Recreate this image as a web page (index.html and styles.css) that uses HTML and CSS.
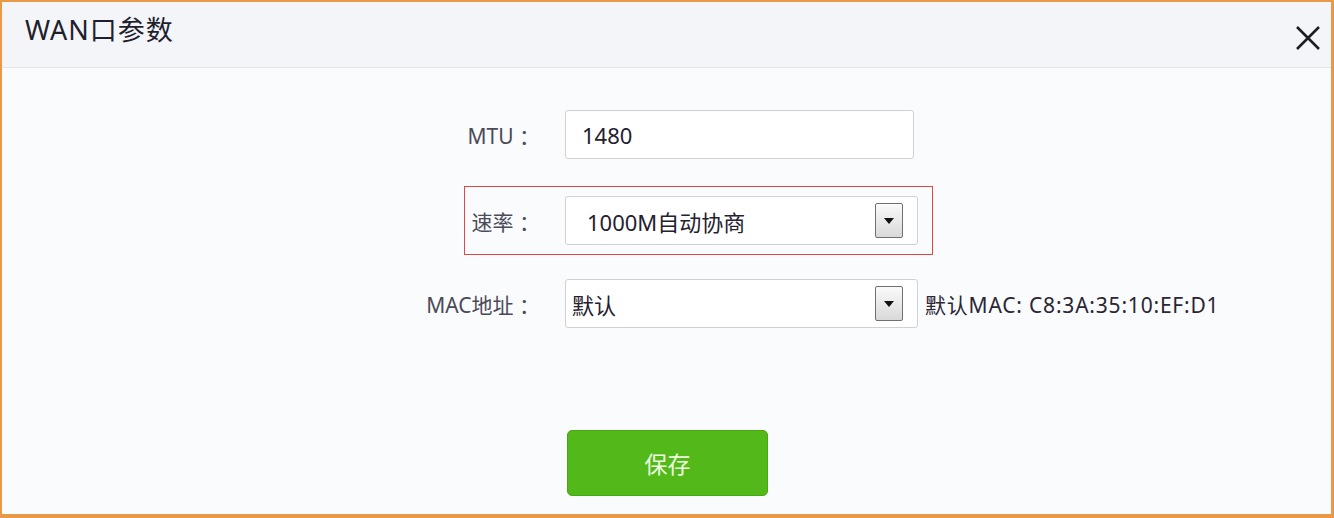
FILE: index.html
```html
<!DOCTYPE html>
<html lang="zh-CN">
<head>
<meta charset="utf-8">
<title>WAN口参数</title>
<link rel="stylesheet" href="styles.css">
</head>
<body>
<div class="frame">
  <div class="header">
    <div class="title">WAN口参数</div>
    <svg class="close" width="26" height="26" viewBox="0 0 26 26"><path d="M2 2 L24 24 M24 2 L2 24" stroke="#1e1e24" stroke-width="2.6" fill="none"/></svg>
  </div>
  <div class="content">
    <div class="form">
      <div class="row">
        <div class="label">MTU ：</div>
        <div class="field input pad-mtu">1480</div>
      </div>
      <div class="row highlight">
        <div class="label short">速率 ：</div>
        <div class="field select pad-speed">1000M自动协商<span class="dd"><span class="tri"></span></span></div>
      </div>
      <div class="row">
        <div class="label">MAC地址 ：</div>
        <div class="field select pad-mac">默认<span class="dd"><span class="tri"></span></span></div>
        <div class="note">默认MAC: C8:3A:35:10:EF:D1</div>
      </div>
      <div class="actions">
        <button class="save">保存</button>
      </div>
    </div>
  </div>
</div>
</body>
</html>
```

FILE: styles.css
```css
* { box-sizing: border-box; }
html, body { margin: 0; padding: 0; }
body {
  width: 1334px;
  height: 518px;
  overflow: hidden;
  font-family: "Noto Sans", "Noto Sans CJK SC", sans-serif;
}
.frame {
  width: 1334px;
  height: 518px;
  border-style: solid;
  border-color: #e99a48;
  border-width: 2px 3px 4px 2px;
  background: #fafbfd;
  display: flex;
  flex-direction: column;
}
.header {
  height: 66px;
  background: #f4f5f9;
  border-bottom: 1px solid #e2e4e8;
  display: flex;
  align-items: center;
  justify-content: space-between;
  padding: 0 10px 0 23px;
  flex: none;
}
.title {
  font-size: 27px;
  letter-spacing: 1px;
  color: #1f1f2e;
  line-height: 1;
  margin-top: -10px;
}
.close { display: block; margin-top: 6px; }
.content { flex: 1; }
.form {
  padding-left: 398px;
  padding-top: 42px;
  display: flex;
  flex-direction: column;
}
.row {
  display: flex;
  align-items: center;
  height: 49px;
}
.row.highlight {
  width: 469px;
  height: 69px;
  margin-left: 64px;
  margin-top: 27px;
  border: 1px solid #e04848;
  padding-right: 14px;
}
.row.highlight + .row { margin-top: 24px; }
.label {
  width: 140px;
  flex: none;
  text-align: right;
  font-size: 21px;
  color: #4a4a58;
  margin-right: 25px;
  white-space: nowrap;
}
.label.mac { letter-spacing: 0.3px; }
.label.short { width: 75px; }
.field {
  height: 49px;
  background: #fff;
  border: 1px solid #cfd1d5;
  border-radius: 3px;
  display: flex;
  align-items: center;
  font-size: 22px;
  color: #24202e;
  position: relative;
  flex: none;
}
.input { width: 349px; }
.select { width: 353px; }
.pad-mtu { padding-left: 16px; }
.pad-speed { padding-left: 21px; }
.pad-mac { padding-left: 6px; }
.dd {
  position: absolute;
  right: 14px;
  top: 6px;
  width: 28px;
  height: 35px;
  border: 1px solid #6f6f74;
  border-radius: 2px;
  background: linear-gradient(#fafafa, #d9d9d9);
  display: flex;
  justify-content: center;
  padding-top: 14px;
}
.tri {
  width: 0;
  height: 0;
  border-left: 5px solid transparent;
  border-right: 5px solid transparent;
  border-top: 6px solid #111;
}
.note {
  margin-left: 7px;
  font-size: 21px;
  letter-spacing: 0.8px;
  color: #2a2634;
  white-space: nowrap;
}
.actions {
  padding-left: 167px;
  margin-top: 102px;
}
.save {
  width: 201px;
  height: 66px;
  background: #53b81a;
  border: 1px solid #48a812;
  border-radius: 5px;
  color: #eefee0;
  font-family: "Noto Sans CJK SC", sans-serif;
  font-size: 23px;
  padding: 0;
}
```
